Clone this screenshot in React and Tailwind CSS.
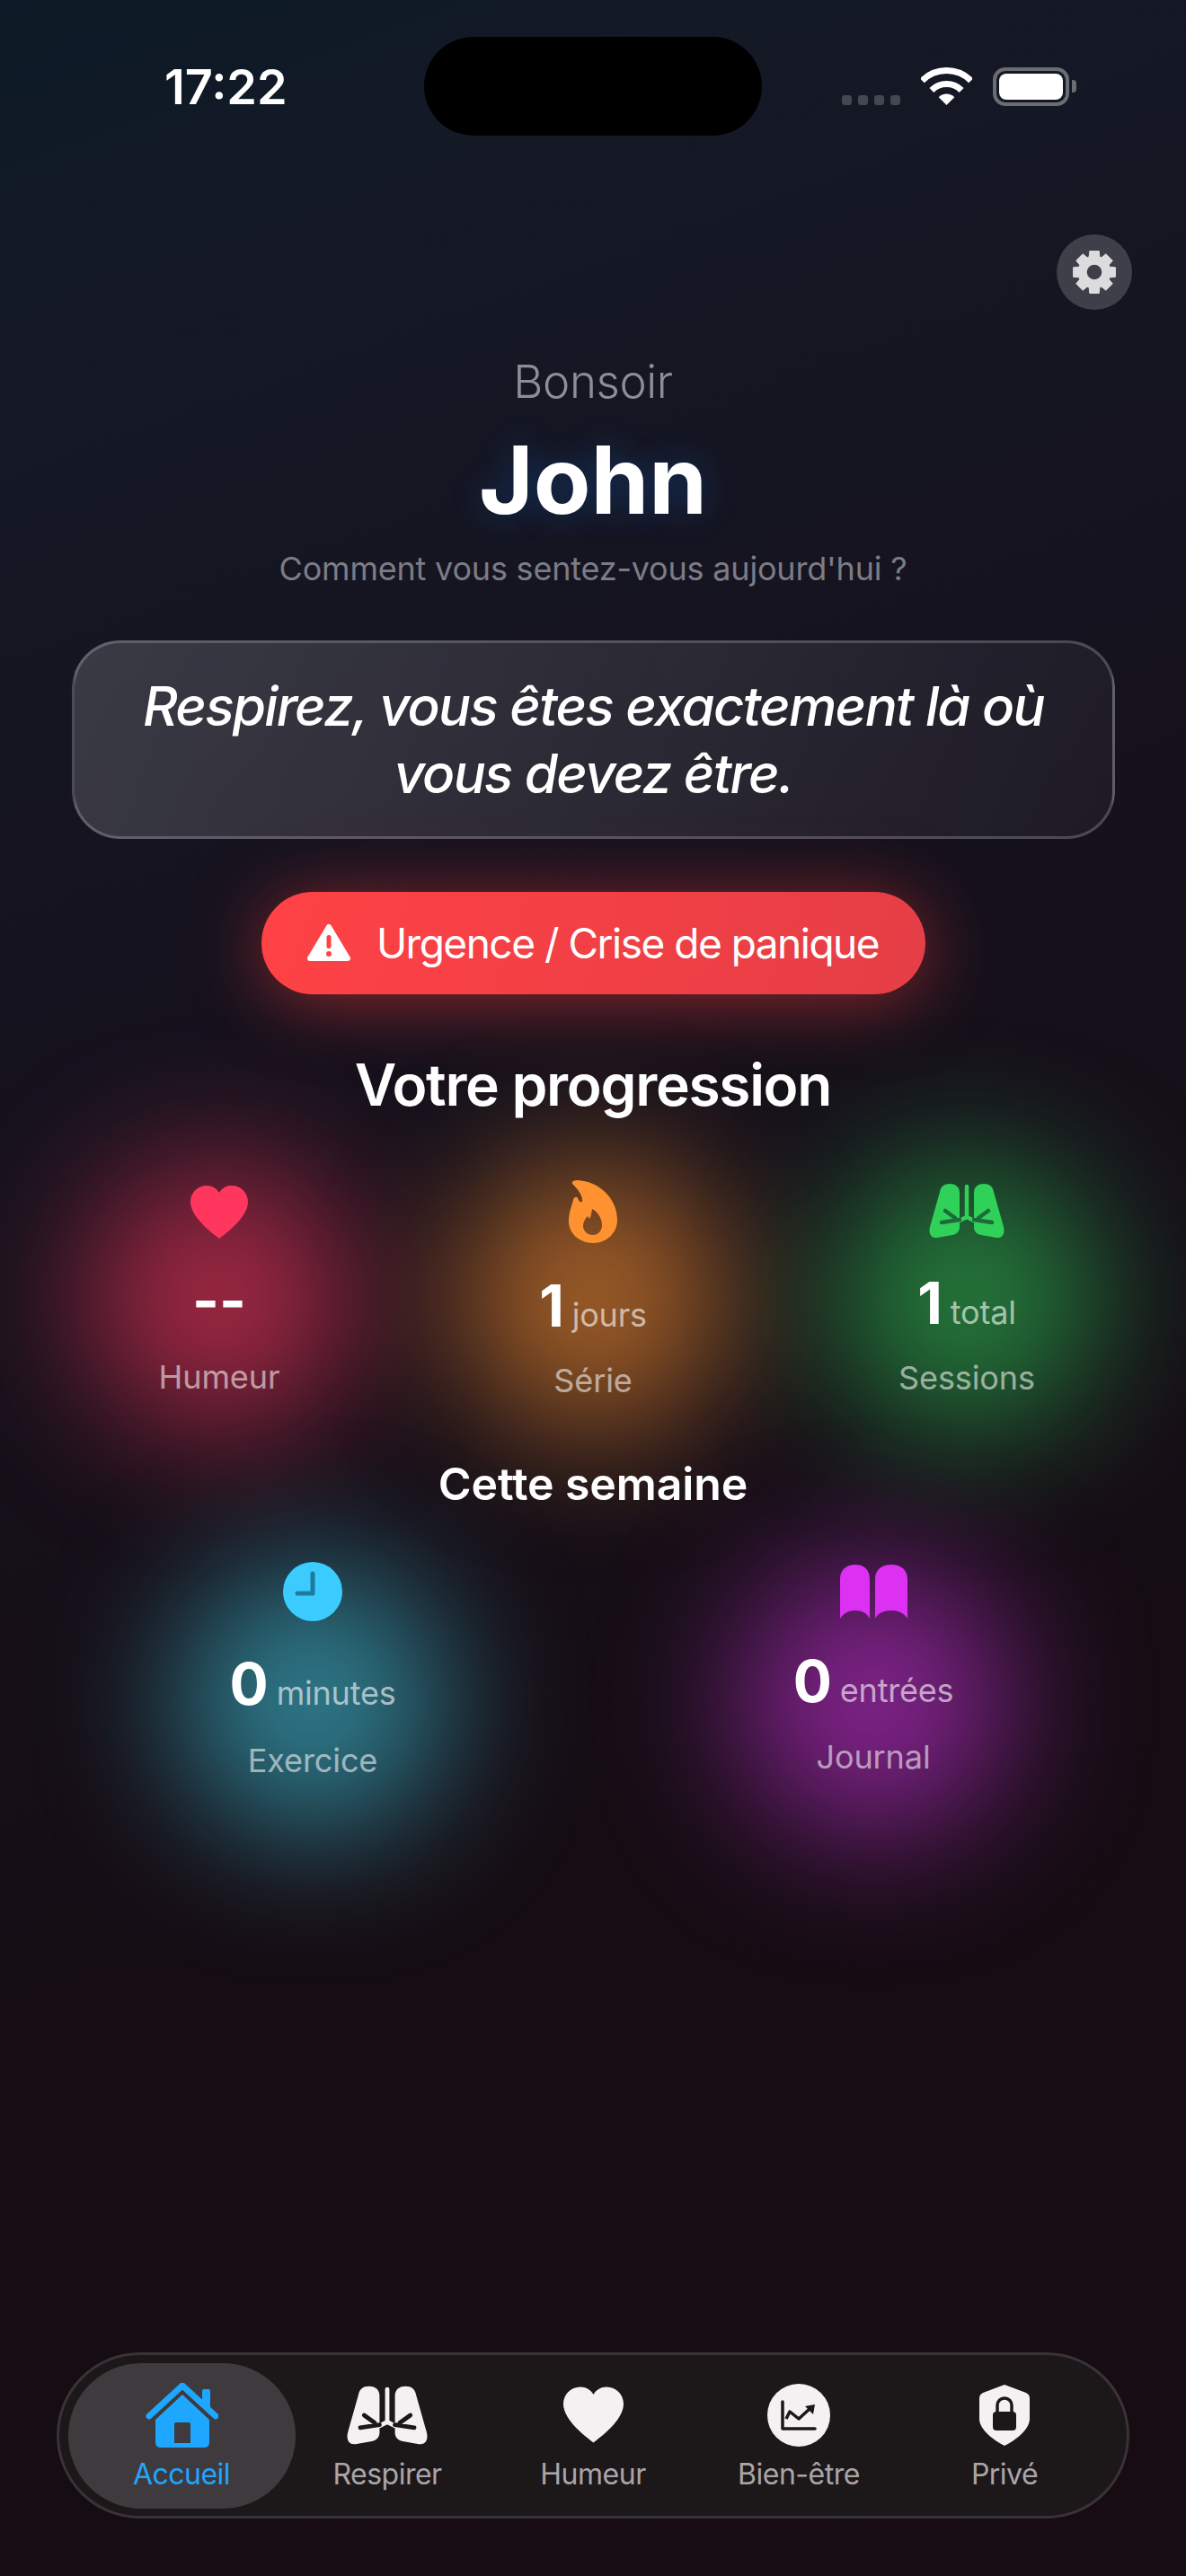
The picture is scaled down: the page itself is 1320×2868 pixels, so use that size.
import React from "react";

// gear outline with 8 teeth, radius in px around 25,25
const gearPath = (() => {
  const pts = [];
  for (let i = 0; i < 8; i++) {
    const a = (i * Math.PI) / 4 - Math.PI / 2;
    [[-0.33, 18], [-0.22, 24], [0.22, 24], [0.33, 18]].forEach(([d, r]) => {
      pts.push(`${(25 + r * Math.cos(a + d)).toFixed(2)} ${(25 + r * Math.sin(a + d)).toFixed(2)}`);
    });
  }
  return `M${pts.join("L")}Z`;
})();

const Gear = () => (
  <svg width="50" height="50" viewBox="0 0 50 50">
    <path d={gearPath} fill="#dcdcde" stroke="#dcdcde" strokeWidth="1" strokeLinejoin="round" />
    <circle cx="25" cy="25" r="8.3" fill="#3f3f49" />
  </svg>
);

const Wifi = () => (
  <svg width="57" height="42" viewBox="0 0 57 42" fill="none" stroke="#fff" strokeWidth="7">
    <path d="M1.3 14.8a38.5 38.5 0 0 1 54.4 0" />
    <path d="M11.9 25.4a23.5 23.5 0 0 1 33.2 0" />
    <path d="M28.5 42L19.7 33.2a12.5 12.5 0 0 1 17.6 0Z" fill="#fff" stroke="none" />
  </svg>
);

const Warning = () => (
  <svg width="48" height="43" viewBox="0 0 48 43">
    <path d="M24 3L45 38H3Z" fill="#fff" stroke="#fff" strokeWidth="6" strokeLinejoin="round" />
    <rect x="21.5" y="12" width="5" height="15" rx="2.5" fill="#ff4245" />
    <circle cx="24" cy="33" r="3" fill="#ff4245" />
  </svg>
);

const Heart = ({ color, w = 64, h = 59 }) => (
  <svg width={w} height={h} viewBox="0 0 64 59">
    <path d="M32 59C27 55 0 36 0 18C0 8 8 0 18 0C24 0 29 3 32 8C35 3 40 0 46 0C56 0 64 8 64 18C64 36 37 55 32 59Z" fill={color} />
  </svg>
);

const Flame = () => (
  <svg width="54" height="71" viewBox="0 0 54 71">
    <path
      fillRule="evenodd"
      fill="#ff9230"
      d="M4 5C3 2 6 1 10 1C32 2 54 20 54 45C54 60 42 71 27 71C12 71 0 60 0 47C0 37 3 31 5 23C6 19 9 19 10 21C11 24 13 26 15 25C16 18 10 11 4 5ZM26 33C25 38 25 41 23 44L21 41C18 44 16 48 16 52C16 58 21 62 27 62C33 62 37 57 37 51C37 43 32 36 26 33Z"
    />
  </svg>
);

const Lung = () => <path d="M34 10C34 3 29 0 23 0C17 0 13 3 12 9L1 48C-1 56 3 61 9 60L26 57C31 56 34 53 34 48Z" />;

const Lungs = ({ color, cut, w = 84, h = 62 }) => (
  <svg width={w} height={h} viewBox="0 0 84 60" fill={color}>
    <Lung />
    <g transform="translate(84 0) scale(-1 1)">
      <Lung />
    </g>
    <path d="M42 3V37M34 41L42 37L50 41" fill="none" stroke={color} strokeWidth="4.5" strokeLinecap="round" strokeLinejoin="round" />
    <path d="M34 40L14 43M29 38L18 30M50 40L70 43M55 38L66 30" fill="none" stroke={cut} strokeWidth="4.5" strokeLinecap="round" />
  </svg>
);

const Clock = () => (
  <svg width="66" height="66" viewBox="0 0 66 66">
    <circle cx="33" cy="33" r="33" fill="#3bcbff" />
    <path d="M33 13V35H16" fill="none" stroke="#1f7a9e" strokeWidth="5" strokeLinecap="round" strokeLinejoin="round" />
  </svg>
);

const Book = () => (
  <svg width="75" height="60" viewBox="0 0 75 60" fill="#dc30f2">
    <path d="M0 16C0 6 7 0 17 0C27 0 33 6 33 16V60C30 54 24 51 17 51C10 51 4 54 0 60Z" />
    <path d="M39 60V16C39 6 46 0 57 0C68 0 75 6 75 16V60C71 54 65 51 57 51C49 51 42 54 39 60Z" />
  </svg>
);

const Home = () => (
  <svg width="81" height="72" viewBox="0 0 81 72" fill="#1ea7ff">
    <path fillRule="evenodd" d="M41 13L71 41V66Q71 72 65 72H17Q11 72 11 66V41ZM32 46Q32 44 34 44H48Q50 44 50 46V67H32Z" />
    <path d="M63 24V9Q63 7 65 7H70Q72 7 72 9V31Z" />
    <path d="M4 37L41 3L78 37" fill="none" stroke="#1ea7ff" strokeWidth="7" strokeLinecap="round" strokeLinejoin="round" />
  </svg>
);

const ChartCircle = () => (
  <svg width="70" height="70" viewBox="0 0 70 70">
    <circle cx="35" cy="35" r="35" fill="#f5f1f3" />
    <path d="M17 20V50H53" fill="none" stroke="#1c181a" strokeWidth="3.5" strokeLinecap="round" strokeLinejoin="round" />
    <path d="M21 39L25 31L35 39L47 28" fill="none" stroke="#1c181a" strokeWidth="3.5" strokeLinejoin="round" />
    <path d="M53 23L42 25L51 34Z" fill="#1c181a" />
  </svg>
);

const Shield = () => (
  <svg width="56" height="68" viewBox="0 0 56 68">
    <path d="M28 0L52 9Q56 11 56 15V38C56 50 40 62 28 68C16 62 0 50 0 38V15Q0 11 4 9Z" fill="#f5f1f3" />
    <path d="M20 32V23a8 8 0 0 1 16 0V32" fill="none" stroke="#1c181a" strokeWidth="3.5" />
    <rect x="15" y="30" width="26" height="21" rx="4" fill="#1c181a" />
  </svg>
);

const Stat = ({ icon, value, unit, label, blob, pad, numGap, labelGap }) => (
  <div className={`relative flex flex-col items-center ${pad}`}>
    <div className={`absolute left-1/2 -translate-x-1/2 w-[300px] h-[300px] rounded-full -z-10 blur-[76px] ${blob}`}></div>
    {icon}
    <div className={`flex items-baseline justify-center gap-[9px] h-16 ${numGap}`}>
      <span className="text-[64px] leading-16 font-bold text-white">{value}</span>
      {unit && <span className="text-[36px] leading-16 tracking-[-0.2px] text-white/60">{unit}</span>}
    </div>
    <div className={`text-[36px] leading-11 tracking-[-0.1px] text-white/55 ${labelGap}`}>{label}</div>
  </div>
);

const NavItem = ({ icon, label, active }) => (
  <div className="relative w-[229px] flex flex-col items-center h-[162px] justify-end pb-[18px]">
    {active && <div className="absolute inset-y-0 -inset-x-3 rounded-[81px] bg-[#3e3a3e]"></div>}
    <div className="relative h-[72px] flex items-center">{icon}</div>
    <div className={`relative mt-[10px] text-[32px] leading-10 tracking-[-0.5px] ${active ? "text-[#1ea7ff]" : "text-[#aaa5a8]"}`}>{label}</div>
  </div>
);

export default function App() {
  return (
    <div className="isolate relative w-[1320px] h-[2868px] overflow-hidden flex flex-col font-['Inter',sans-serif] bg-[linear-gradient(160deg,#0b1a26_0%,#141926_10%,#15131f_32%,#160d14_68%,#160c12_100%)]">
      {/* status bar */}
      <div className="grid grid-cols-[1fr_376px_1fr] pt-[41px] h-[151px]">
        <div className="pl-[183px] flex items-center text-[54px] font-semibold text-white">17:22</div>
        <div className="h-[110px] rounded-[55px] bg-black"></div>
        <div className="pl-[89px] pt-[34px] flex items-start">
          <div className="flex gap-[7px] mt-[31px]">
            <span className="w-[11px] h-[11px] rounded-[3px] bg-[#45474f]"></span>
            <span className="w-[11px] h-[11px] rounded-[3px] bg-[#45474f]"></span>
            <span className="w-[11px] h-[11px] rounded-[3px] bg-[#45474f]"></span>
            <span className="w-[11px] h-[11px] rounded-[3px] bg-[#45474f]"></span>
          </div>
          <div className="ml-[23px]">
            <Wifi />
          </div>
          <div className="ml-[23px] w-[85px] h-[43px] rounded-[14px] border-4 border-[#6b6d75] p-[3px]">
            <div className="w-full h-full rounded-[8px] bg-white"></div>
          </div>
          <div className="ml-[3px] mt-[14px] w-[5px] h-[14px] rounded-r-[4px] bg-[#6b6d75]"></div>
        </div>
      </div>

      {/* settings */}
      <div className="flex justify-end pr-[60px] mt-[110px]">
        <div className="w-[84px] h-[84px] rounded-full bg-[#3f3f49] flex items-center justify-center">
          <Gear />
        </div>
      </div>

      {/* greeting */}
      <div className="mt-[50px] text-center text-[51px] leading-[60px] font-light tracking-[-0.4px] text-[#8e8e96]">Bonsoir</div>
      <div className="mt-[24px] text-center text-[104px] leading-[110px] font-bold text-white [text-shadow:0_0_36px_rgba(30,130,255,0.28)]">John</div>
      <div className="mt-[22px] text-center text-[36px] leading-11 tracking-[-0.2px] text-[#7c7c86]">Comment vous sentez-vous aujourd'hui ?</div>

      {/* quote */}
      <div className="mt-[58px] ml-[80px] mr-[79px] h-[221px] rounded-[54px] border-[3px] border-white/20 bg-[linear-gradient(110deg,rgba(255,255,255,0.16),rgba(255,255,255,0.04))] flex items-center justify-center px-10">
        <p className="text-center text-[60px] leading-[75px] italic font-medium tracking-[-1.75px] text-white">Respirez, vous êtes exactement là où vous devez être.</p>
      </div>

      {/* urgence */}
      <div className="mt-[59px] flex justify-center">
        <div className="w-[739px] h-[114px] rounded-[57px] bg-[linear-gradient(110deg,#ff4245,#e53e46)] shadow-[0_8px_80px_rgba(255,60,60,0.5)] flex items-center justify-center gap-[29px]">
          <Warning />
          <span className="text-[46px] tracking-[-1.5px] text-white">Urgence / Crise de panique</span>
        </div>
      </div>

      <div className="mt-[61px] text-center text-[64px] leading-20 font-semibold tracking-[-1.3px] text-white">Votre progression</div>

      {/* stats */}
      <div className="grid grid-cols-3 px-9 pt-px">
        <Stat
          icon={<Heart color="#ff375f" />}
          value="--"
          label="Humeur"
          blob="bg-[#ff375f]/60 top-[46px]"
          pad="pt-[71px]"
          numGap="mt-[37px]"
          labelGap="mt-[31px]"
        />
        <Stat
          icon={<Flame />}
          value="1"
          unit="jours"
          label="Série"
          blob="bg-[#ff9230]/60 top-[46px]"
          pad="pt-[64px]"
          numGap="mt-[38px]"
          labelGap="mt-[29px]"
        />
        <Stat
          icon={<Lungs color="#30d158" cut="#20693a" />}
          value="1"
          unit="total"
          label="Sessions"
          blob="bg-[#30d158]/55 top-[46px]"
          pad="pt-[68px]"
          numGap="mt-[40px]"
          labelGap="mt-[29px]"
        />
      </div>

      <div className="mt-[63px] text-center text-[50px] leading-[60px] font-semibold tracking-[-0.1px] text-white">Cette semaine</div>

      <div className="grid grid-cols-2 px-9">
        <Stat
          icon={<Clock />}
          value="0"
          unit="minutes"
          label="Exercice"
          blob="bg-[#40c8e0]/60 top-[62px]"
          pad="pt-[57px]"
          numGap="mt-[38px]"
          labelGap="mt-[31px]"
        />
        <Stat
          icon={<Book />}
          value="0"
          unit="entrées"
          label="Journal"
          blob="bg-[#bf2fd0]/65 top-[62px]"
          pad="pt-[60px]"
          numGap="mt-[38px]"
          labelGap="mt-[30px]"
        />
      </div>

      {/* tab bar */}
      <div className="mt-auto mb-[64px] mx-[63px] h-[185px] rounded-[93px] border-[3px] border-[#3a3236] bg-[#1c181a] flex items-center justify-center">
        <NavItem active icon={<Home />} label="Accueil" />
        <NavItem icon={<Lungs color="#f5f1f3" cut="#1c181a" w={90} h={66} />} label="Respirer" />
        <NavItem icon={<Heart color="#f5f1f3" w={67} h={63} />} label="Humeur" />
        <NavItem icon={<ChartCircle />} label="Bien-être" />
        <NavItem icon={<Shield />} label="Privé" />
      </div>
    </div>
  );
}
